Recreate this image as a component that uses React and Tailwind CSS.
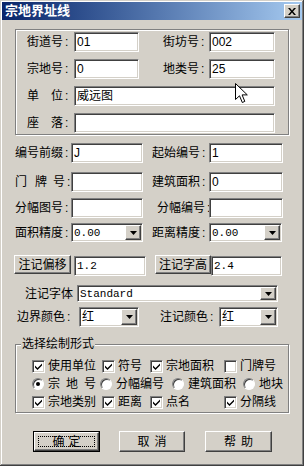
import React from 'react';

const sunken =
  'border border-t-[#808080] border-l-[#808080] border-b-white border-r-white shadow-[inset_1px_1px_0_#404040,inset_-1px_-1px_0_#d4d0c8]';
const raised =
  'border border-t-white border-l-white border-b-[#404040] border-r-[#404040] shadow-[inset_-1px_-1px_0_#808080,inset_1px_1px_0_#d4d0c8]';
const etched = 'border border-[#808080] shadow-[inset_1px_1px_0_#ffffff,1px_1px_0_#ffffff]';
const mono = "font-['Liberation_Mono',monospace] text-[11px]";

const C = () => <span className="ml-[2px]">:</span>;

const L = ({ w, className = '', children }) => (
  <div className={`${w} shrink-0 whitespace-nowrap ${className}`}>{children}</div>
);

const Field = ({ w, h = 'h-[20px]', value, isMono, className = '' }) => (
  <div
    className={`${w} ${h} shrink-0 bg-white ${sunken} flex items-center pl-[2px] overflow-hidden whitespace-nowrap ${
      isMono ? mono : 'text-[12px]'
    } ${className}`}
  >
    {value}
  </div>
);

const Arrow = () => (
  <svg width="7" height="4" viewBox="0 0 7 4">
    <path d="M0 0h7L3.5 4z" fill="#000" />
  </svg>
);

const Combo = ({ w, h = 'h-[20px]', value, isMono, className = '' }) => (
  <div className={`${w} ${h} shrink-0 bg-white ${sunken} flex items-stretch p-[1px] ${className}`}>
    <div className={`flex-1 flex items-center pl-[1px] whitespace-nowrap ${isMono ? mono : 'text-[12px]'}`}>
      {value}
    </div>
    <div className={`w-[16px] bg-[#d4d0c8] ${raised} flex items-center justify-center`}>
      <Arrow />
    </div>
  </div>
);

const Btn = ({ w, h = 'h-[21px]', className = '', children }) => (
  <div className={`${w} ${h} shrink-0 bg-[#d4d0c8] ${raised} flex items-center justify-center whitespace-nowrap ${className}`}>
    {children}
  </div>
);

const Check = ({ checked }) => (
  <div className={`w-[13px] h-[13px] shrink-0 bg-white ${sunken} flex items-center justify-center`}>
    {checked && (
      <svg width="7" height="7" viewBox="0 0 7 7">
        <path d="M0 2.5L2.5 5L7 0.5V2.5L2.5 7L0 4.5Z" fill="#000" />
      </svg>
    )}
  </div>
);

const Radio = ({ checked }) => (
  <div className="w-[12px] h-[12px] shrink-0 rounded-full bg-white border border-t-[#808080] border-l-[#808080] border-b-white border-r-white shadow-[inset_1px_1px_0_#404040] flex items-center justify-center">
    {checked && <div className="w-[4px] h-[4px] rounded-full bg-black" />}
  </div>
);

const Opt = ({ w = '', checked, radio, children }) => (
  <div className={`${w} shrink-0 flex items-center whitespace-nowrap`}>
    {radio ? <Radio checked={checked} /> : <Check checked={checked} />}
    <span className={radio ? 'ml-[4px]' : 'ml-[3px]'}>{children}</span>
  </div>
);

const Spaced = ({ a, b, gap = 'ml-[5px]' }) => (
  <>
    <span>{a}</span>
    <span className={gap}>{b}</span>
  </>
);

export default function App() {
  return (
    <div className="w-[305px] h-[466px] bg-white">
      <div className="relative w-[304px] h-[466px] bg-[#d4d0c8] p-[2px] shadow-[inset_-1px_-1px_0_#404040,inset_1px_1px_0_#d4d0c8,inset_-2px_-2px_0_#808080,inset_2px_2px_0_#ffffff] text-black text-[12px] leading-[14px] font-['Liberation_Sans','Noto_Sans_CJK_SC',sans-serif]">
        {/* title bar */}
        <div className="h-[18px] flex items-center justify-between bg-linear-to-r from-[#0a246a] to-[#a6caf0]">
          <span className="pl-[3px] text-[13px] font-bold text-white">宗地界址线</span>
          <div className={`mr-[2px] w-[16px] h-[14px] bg-[#d4d0c8] ${raised} flex items-center justify-center`}>
            <svg width="8" height="7" viewBox="0 0 8 7">
              <path d="M0 0h2l2 2.4L6 0h2L5 3.5 8 7H6L4 4.6 2 7H0l3-3.5z" fill="#000" />
            </svg>
          </div>
        </div>

        {/* group 1 */}
        <div className={`mt-[9px] ml-[13px] w-[274px] ${etched} pt-[2px] pb-[1px] flex flex-col gap-[7px]`}>
          <div className="flex items-center pl-[11px]">
            <L w="w-[47px]">街道号<C /></L>
            <Field w="w-[65px]" value="01" />
            <L w="w-[46px]" className="ml-[24px]">街坊号<C /></L>
            <Field w="w-[66px]" value="002" />
          </div>
          <div className="flex items-center pl-[11px]">
            <L w="w-[47px]">宗地号<C /></L>
            <Field w="w-[65px]" value="0" />
            <L w="w-[46px]" className="ml-[24px]">地类号<C /></L>
            <Field w="w-[66px]" value="25" />
          </div>
          <div className="flex items-center pl-[11px]">
            <L w="w-[47px]">单　位<C /></L>
            <Field w="w-[201px]" value="威远图" />
          </div>
          <div className="flex items-center pl-[11px]">
            <L w="w-[47px]">座　落<C /></L>
            <Field w="w-[201px]" value="" />
          </div>
        </div>

        {/* fields */}
        <div className="mt-[8px] pl-[13px] flex items-center">
          <L w="w-[56px]">编号前缀<C /></L>
          <Field w="w-[72px]" value="J" />
          <L w="w-[57px]" className="ml-[9px]">起始编号<C /></L>
          <Field w="w-[74px]" value="1" />
        </div>
        <div className="mt-[9px] pl-[13px] flex items-center">
          <L w="w-[56px]">
            <span>门</span>
            <span className="ml-[8px]">牌</span>
            <span className="ml-[6px]">号</span>
            <C />
          </L>
          <Field w="w-[72px]" value="" />
          <L w="w-[57px]" className="ml-[9px]">建筑面积<C /></L>
          <Field w="w-[74px]" value="0" />
        </div>
        <div className="mt-[6px] pl-[13px] flex items-center">
          <L w="w-[56px]">分幅图号<C /></L>
          <Field w="w-[72px]" value="" />
          <L w="w-[52px]" className="ml-[14px]">分幅编号<C /></L>
          <Field w="w-[74px]" value="" />
        </div>
        <div className="mt-[5px] pl-[13px] flex items-center">
          <L w="w-[56px]">面积精度<C /></L>
          <Combo w="w-[72px]" h="h-[19px]" value="0.00" isMono />
          <L w="w-[57px]" className="ml-[9px]">距离精度<C /></L>
          <Combo w="w-[73px]" h="h-[19px]" value="0.00" isMono />
        </div>

        {/* annotation */}
        <div className="mt-[13px] pl-[12px] flex items-start">
          <Btn w="w-[57px]" h="h-[19px]">注记偏移</Btn>
          <Field w="w-[72px]" value="1.2" isMono className="ml-[3px] mt-[1px]" />
          <Btn w="w-[56px]" h="h-[19px]" className="ml-[9px]">注记字高</Btn>
          <Field w="w-[71px]" value="2.4" isMono className="mt-[1px]" />
        </div>
        <div className="mt-[9px] pl-[23px] flex items-center">
          <L w="w-[52px]">注记字体</L>
          <Combo w="w-[201px]" h="h-[17px]" value="Standard" isMono />
        </div>
        <div className="mt-[5px] pl-[15px] flex items-center">
          <L w="w-[62px]">边界颜色<C /></L>
          <Combo w="w-[60px]" value="红" />
          <L w="w-[59px]" className="ml-[21px]">注记颜色<C /></L>
          <Combo w="w-[59px]" value="红" />
        </div>

        {/* group 2 */}
        <div className={`relative mt-[17px] ml-[13px] w-[274px] ${etched} pt-[12px] pb-[1px]`}>
          <span className="absolute left-[5px] -top-[8px] px-[1px] bg-[#d4d0c8]">选择绘制形式</span>
          <div className="h-[18px] pl-[16px] flex items-center">
            <Opt w="w-[70px]" checked>使用单位</Opt>
            <Opt w="w-[48px]" checked>符号</Opt>
            <Opt w="w-[74px]" checked>宗地面积</Opt>
            <Opt>门牌号</Opt>
          </div>
          <div className="h-[18px] pl-[16px] flex items-center">
            <Opt w="w-[68px]" radio checked>
              <span>宗</span>
              <span className="ml-[6px]">地</span>
              <span className="ml-[6px]">号</span>
            </Opt>
            <Opt w="w-[72px]" radio>分幅编号</Opt>
            <Opt w="w-[71px]" radio>建筑面积</Opt>
            <Opt radio>地块</Opt>
          </div>
          <div className="h-[18px] pl-[16px] flex items-center">
            <Opt w="w-[70px]" checked>宗地类别</Opt>
            <Opt w="w-[48px]" checked>距离</Opt>
            <Opt w="w-[74px]" checked>点名</Opt>
            <Opt checked>分隔线</Opt>
          </div>
        </div>

        {/* buttons */}
        <div className="mt-[18px] pl-[31px] flex items-center">
          <div className="w-[67px] h-[21px] shrink-0 border border-black">
            <div className={`h-full ${raised} p-[3px]`}>
              <div className="h-full border border-dotted border-black flex items-center justify-center">
                <Spaced a="确" b="定" gap="ml-[4px]" />
              </div>
            </div>
          </div>
          <Btn w="w-[66px]" className="ml-[19px]">
            <Spaced a="取" b="消" />
          </Btn>
          <Btn w="w-[67px]" className="ml-[20px]">
            <Spaced a="帮" b="助" />
          </Btn>
        </div>

        {/* mouse pointer */}
        <svg className="absolute left-[235px] top-[83px]" width="13" height="21" viewBox="0 0 13 21">
          <path d="M0.5 0.5V16.5L4.5 12.8L7.3 19.5L9.8 18.4L7.1 11.9H12.3Z" fill="#fff" stroke="#000" strokeWidth="1" />
        </svg>
      </div>
    </div>
  );
}
